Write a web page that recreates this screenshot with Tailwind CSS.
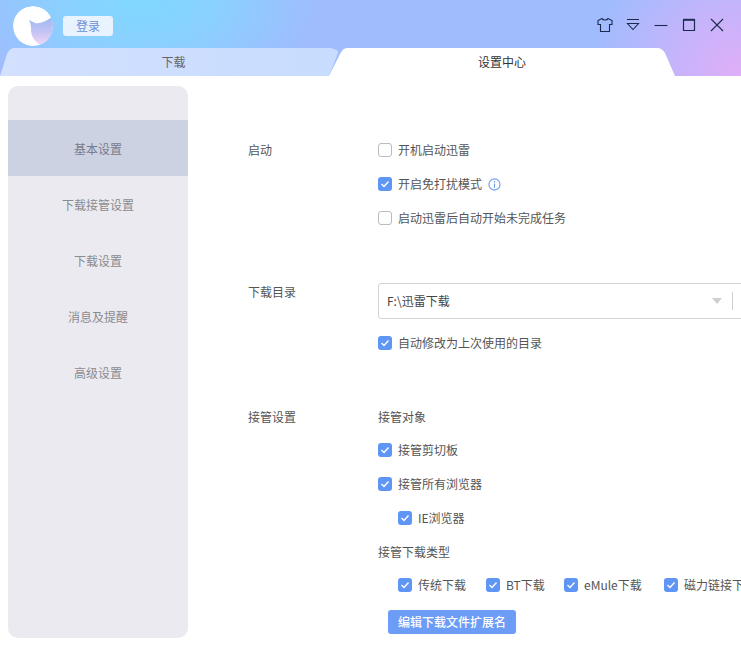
<!doctype html>
<html lang="zh">
<head>
<meta charset="utf-8">
<title>设置中心</title>
<script src="https://cdn.jsdelivr.net/npm/@tailwindcss/browser@4"></script>
</head>
<body class="w-[741px] h-[647px] overflow-hidden bg-white font-['Noto_Sans_CJK_SC','Noto_Sans',sans-serif] text-xs text-[#555]">

<!-- title bar -->
<div class="h-[76px] flex flex-col bg-[radial-gradient(circle_at_100%_100%,#e0aef8_0,#c5b4fb_70px,transparent_150px),radial-gradient(ellipse_180px_105px_at_140px_0,#7fd8ff_0,#8bd0ff_45%,transparent_100%),linear-gradient(90deg,#9fbcfd_0,#a0bcfe_100%)]">
  <div class="h-[48px] flex items-start">
    <div class="ml-[13px] mt-[6px] w-10 h-10 rounded-full overflow-hidden">
      <svg viewBox="0 0 40 40" class="w-10 h-10">
        <defs>
          <linearGradient id="logo" x1="0" y1="0" x2="0" y2="1">
            <stop offset="0" stop-color="#9db8f3"/>
            <stop offset="0.55" stop-color="#c4c4f4"/>
            <stop offset="1" stop-color="#f3d4f6"/>
          </linearGradient>
        </defs>
        <circle cx="20" cy="20" r="20" fill="#fff"/>
        <path d="M39 11C33 15 27 18 22 17C20 16 18 15 16 14C18 18 18 21 18 24C18 30 22 36 27 38.5C35 36 40 28 40 20C40 16 40 13 39 11Z" fill="url(#logo)"/>
      </svg>
    </div>
    <div class="ml-[10px] mt-[16px] w-[50px] h-5 rounded-[3px] bg-[#e9f3fd] text-[#6c8fd8] flex items-center justify-center">登录</div>
    <div class="ml-auto mr-4 mt-[17px] flex items-center gap-3">
      <svg viewBox="0 0 16 16" class="w-4 h-4" fill="none" stroke="#1c2a50" stroke-width="1.1">
        <path d="M5 1.5L1 3.5V7.5H3.5V14.5H12.5V7.5H15V3.5L11 1.5C10.5 3.5 5.5 3.5 5 1.5Z"/>
      </svg>
      <svg viewBox="0 0 16 16" class="w-4 h-4" fill="none" stroke="#1c2a50" stroke-width="1.1">
        <path d="M2 2.5H14M2.5 6.5H13.5L8 12.5Z"/>
      </svg>
      <svg viewBox="0 0 16 16" class="w-4 h-4" fill="none" stroke="#1c2a50" stroke-width="1.1">
        <path d="M1.5 8.5H14.5"/>
      </svg>
      <svg viewBox="0 0 16 16" class="w-4 h-4" fill="none" stroke="#1c2a50" stroke-width="1.2">
        <path d="M2.5 2.5H13.5V13.5H2.5Z"/><path d="M2.5 2.8H13.5" stroke-width="2"/>
      </svg>
      <svg viewBox="0 0 16 16" class="w-4 h-4" fill="none" stroke="#1c2a50" stroke-width="1.1">
        <path d="M2 2L14 14M14 2L2 14"/>
      </svg>
    </div>
  </div>
  <!-- tabs -->
  <div class="h-7 flex">
    <div class="relative w-[341px] h-7 flex items-center justify-center text-[#666] pl-[6px]">
      <svg viewBox="0 0 341 28" class="absolute inset-0 w-[341px] h-7">
        <defs>
          <linearGradient id="tab" x1="0" y1="0" x2="1" y2="0">
            <stop offset="0" stop-color="#d3e0fe"/>
            <stop offset="1" stop-color="#c7dcfe"/>
          </linearGradient>
        </defs>
        <path d="M0 28L7 6C9 2 11 0 15 0H328C333 0 339 2 338 5L329 28Z" fill="url(#tab)"/>
      </svg>
      <span class="relative">下载</span>
    </div>
    <div class="relative w-[346px] -ml-[12px] h-7 flex items-center justify-center text-[#333]">
      <svg viewBox="0 0 346 28" class="absolute inset-0 w-[346px] h-7">
        <path d="M0 28L11 6C13 2 15 0 19 0H328C332 0 334 2 336 5L346 28Z" fill="#fff"/>
      </svg>
      <span class="relative">设置中心</span>
    </div>
  </div>
</div>

<div class="flex h-[571px]">
  <!-- side menu -->
  <div class="ml-2 mt-[10px] w-[180px] h-[552px] rounded-[10px] bg-[#ebeaf1] pt-[34px] text-[#8a8a8f] text-center shrink-0">
    <div class="h-14 leading-[57px] bg-[#cdd2e3] text-[#777c8c]">基本设置</div>
    <div class="h-14 leading-[57px]">下载接管设置</div>
    <div class="h-14 leading-[57px]">下载设置</div>
    <div class="h-14 leading-[57px]">消息及提醒</div>
    <div class="h-14 leading-[57px]">高级设置</div>
  </div>

  <div class="ml-[60px] flex-1 min-w-0 overflow-hidden pt-[64px]">
    <!-- 启动 -->
    <div class="flex">
      <div class="w-[130px] h-5 leading-5 shrink-0">启动</div>
      <div class="flex flex-col gap-[14px] whitespace-nowrap">
        <div class="h-5 flex items-center gap-[6px]">
          <span class="w-[14px] h-[14px] rounded-[3px] border border-[#bbb] bg-white"></span>开机启动迅雷
        </div>
        <div class="h-5 flex items-center gap-[6px]">
          <svg viewBox="0 0 14 14" class="w-[14px] h-[14px]"><rect width="14" height="14" rx="3" fill="#5f95f5"/><path d="M3.5 7L6 9.5L10.5 4.5" fill="none" stroke="#fff" stroke-width="1.4"/></svg>开启免打扰模式
          <svg viewBox="0 0 14 14" class="w-[13px] h-[13px]" fill="none" stroke="#6f9fe8" stroke-width="1.2"><circle cx="7" cy="7" r="6"/><path d="M7 6V10.5M7 3.2V4.8"/></svg>
        </div>
        <div class="h-5 flex items-center gap-[6px]">
          <span class="w-[14px] h-[14px] rounded-[3px] border border-[#bbb] bg-white"></span>启动迅雷后自动开始未完成任务
        </div>
      </div>
    </div>

    <!-- 下载目录 -->
    <div class="flex mt-[55px]">
      <div class="w-[130px] h-5 leading-5 mt-[-1px] shrink-0">下载目录</div>
      <div class="flex-1 min-w-0">
        <div class="w-[420px] h-9 rounded-[3px] border border-[#d4d4d4] flex items-center pl-2 text-[#444]">
          F:\迅雷下载
          <span class="ml-[262px] w-0 h-0 border-x-[5px] border-x-transparent border-t-[6px] border-t-[#cfcfcf]"></span>
          <span class="ml-[10px] w-px h-[18px] bg-[#cfcfcf]"></span>
        </div>
        <div class="mt-[14px] h-5 flex items-center gap-[6px]">
          <svg viewBox="0 0 14 14" class="w-[14px] h-[14px]"><rect width="14" height="14" rx="3" fill="#5f95f5"/><path d="M3.5 7L6 9.5L10.5 4.5" fill="none" stroke="#fff" stroke-width="1.4"/></svg>自动修改为上次使用的目录
        </div>
      </div>
    </div>

    <!-- 接管设置 -->
    <div class="flex mt-[54px]">
      <div class="w-[130px] h-5 leading-5 shrink-0">接管设置</div>
      <div class="flex-1 min-w-0 whitespace-nowrap">
        <div class="h-5 leading-5">接管对象</div>
        <div class="mt-[13px] h-5 flex items-center gap-[6px]">
          <svg viewBox="0 0 14 14" class="w-[14px] h-[14px]"><rect width="14" height="14" rx="3" fill="#5f95f5"/><path d="M3.5 7L6 9.5L10.5 4.5" fill="none" stroke="#fff" stroke-width="1.4"/></svg>接管剪切板
        </div>
        <div class="mt-[14px] h-5 flex items-center gap-[6px]">
          <svg viewBox="0 0 14 14" class="w-[14px] h-[14px]"><rect width="14" height="14" rx="3" fill="#5f95f5"/><path d="M3.5 7L6 9.5L10.5 4.5" fill="none" stroke="#fff" stroke-width="1.4"/></svg>接管所有浏览器
        </div>
        <div class="mt-[14px] ml-5 h-5 flex items-center gap-[6px]">
          <svg viewBox="0 0 14 14" class="w-[14px] h-[14px]"><rect width="14" height="14" rx="3" fill="#5f95f5"/><path d="M3.5 7L6 9.5L10.5 4.5" fill="none" stroke="#fff" stroke-width="1.4"/></svg>IE浏览器
        </div>
        <div class="mt-[14px] h-5 leading-5">接管下载类型</div>
        <div class="mt-[13px] ml-5 h-5 flex items-center w-[500px]">
          <svg viewBox="0 0 14 14" class="w-[14px] h-[14px] shrink-0"><rect width="14" height="14" rx="3" fill="#5f95f5"/><path d="M3.5 7L6 9.5L10.5 4.5" fill="none" stroke="#fff" stroke-width="1.4"/></svg>
          <span class="ml-[6px] shrink-0">传统下载</span>
          <svg viewBox="0 0 14 14" class="ml-5 w-[14px] h-[14px] shrink-0"><rect width="14" height="14" rx="3" fill="#5f95f5"/><path d="M3.5 7L6 9.5L10.5 4.5" fill="none" stroke="#fff" stroke-width="1.4"/></svg>
          <span class="ml-[6px] w-[39px] shrink-0">BT下载</span>
          <svg viewBox="0 0 14 14" class="ml-[19px] w-[14px] h-[14px] shrink-0"><rect width="14" height="14" rx="3" fill="#5f95f5"/><path d="M3.5 7L6 9.5L10.5 4.5" fill="none" stroke="#fff" stroke-width="1.4"/></svg>
          <span class="ml-[6px] w-[61px] shrink-0">eMule下载</span>
          <svg viewBox="0 0 14 14" class="ml-[19px] w-[14px] h-[14px] shrink-0"><rect width="14" height="14" rx="3" fill="#5f95f5"/><path d="M3.5 7L6 9.5L10.5 4.5" fill="none" stroke="#fff" stroke-width="1.4"/></svg>
          <span class="ml-[6px] shrink-0">磁力链接下载</span>
        </div>
        <div class="mt-[15px] ml-[10px] w-[128px] h-6 rounded-[3px] bg-[#6c9cf6] text-white font-medium flex items-center justify-center">编辑下载文件扩展名</div>
      </div>
    </div>
  </div>
</div>
</body>
</html>
